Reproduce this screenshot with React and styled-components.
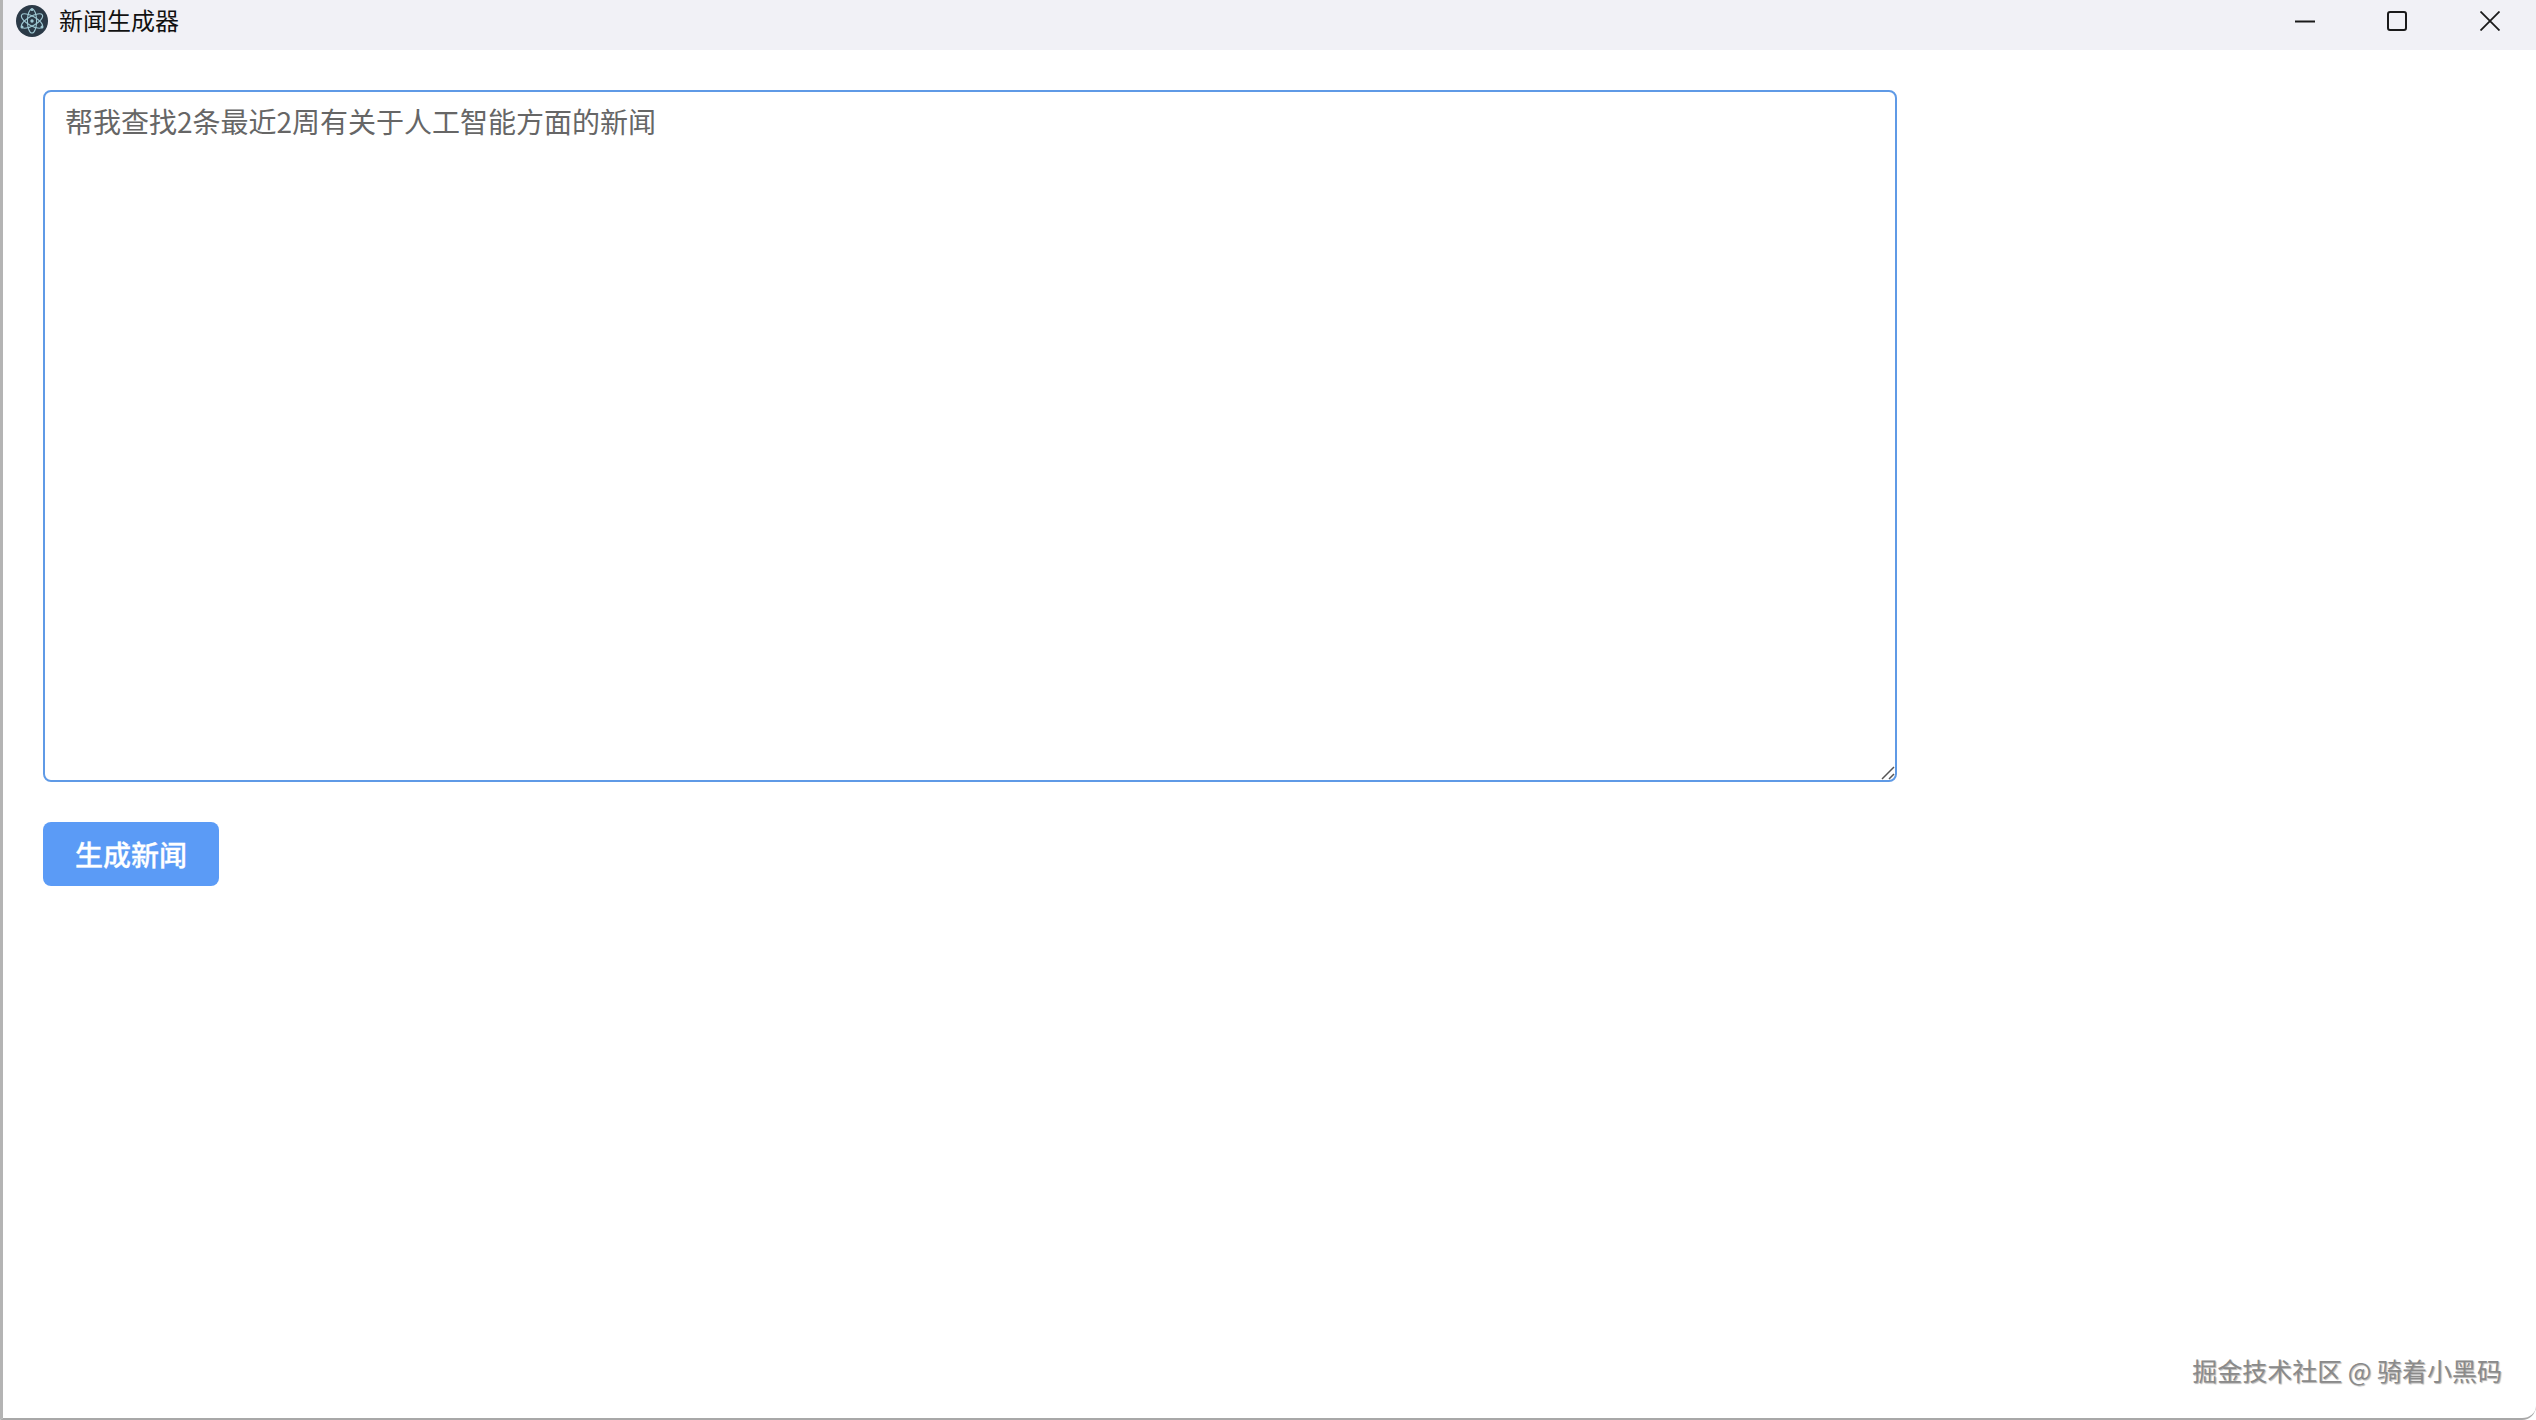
import styled, { createGlobalStyle } from 'styled-components';

const GlobalStyle = createGlobalStyle`
    html, body {
        margin: 0;
        padding: 0;
        height: 100%;
        background: #fff;
        overflow: hidden;
    }
`;

const Frame = styled.div`
    position: relative;
    box-sizing: border-box;
    width: 2536px;
    height: 1420px;
    display: flex;
    flex-direction: column;
    background: #fff;
    border-left: 3px solid #b4b4b4;
    border-bottom: 2px solid #a8a8a8;
    border-bottom-right-radius: 14px;
    font-family: "Noto Sans CJK SC", "Noto Sans", sans-serif;
`;

const TitleBar = styled.header`
    flex: none;
    box-sizing: border-box;
    height: 50px;
    display: flex;
    align-items: center;
    background: #f1f1f6;
    padding: 0 0 8px 13px;
`;

const AppLogo = styled.svg`
    width: 32px;
    height: 32px;
    flex: none;
`;

const AppTitle = styled.div`
    margin: -2px 0 0 11px;
    font-size: 24px;
    line-height: 32px;
    color: #111;
`;

const WindowButtons = styled.div`
    margin-left: auto;
    display: flex;
    height: 100%;
`;

const WindowButton = styled.button`
    width: ${props => props.$width || 92}px;
    height: 100%;
    padding: 0;
    border: none;
    background: transparent;
    display: flex;
    align-items: center;
    justify-content: center;
    color: #1a1a1a;
`;

const Main = styled.main`
    display: flex;
    flex-direction: column;
    align-items: flex-start;
    gap: 40px;
    padding: 40px 0 0 40px;
`;

const PromptBox = styled.div`
    position: relative;
    width: 1854px;
    height: 692px;
`;

const Prompt = styled.textarea`
    box-sizing: border-box;
    display: block;
    width: 100%;
    height: 100%;
    padding: 9px 20px;
    border: 2px solid #5f9ae6;
    border-radius: 8px;
    outline: none;
    resize: none;
    background: #fff;
    color: #666;
    font-family: "Noto Sans CJK SC", "Noto Sans", sans-serif;
    font-size: 28px;
    line-height: 40px;
`;

const ResizeGrip = styled.svg`
    position: absolute;
    right: 2px;
    bottom: 2px;
    width: 14px;
    height: 14px;
`;

const GenerateButton = styled.button`
    width: 176px;
    height: 64px;
    padding: 0;
    border: none;
    border-radius: 8px;
    background: #5b9bf6;
    color: #fff;
    font-family: "Noto Sans CJK SC", "Noto Sans", sans-serif;
    font-size: 28px;
    font-weight: 500;
    line-height: 64px;
    -webkit-text-stroke: 0.3px #fff;
`;

const Watermark = styled.div`
    position: absolute;
    right: 34px;
    bottom: 32px;
    font-size: 25px;
    line-height: 32px;
    color: #8a8a8a;
    text-shadow: 1px 1px 1px #b4b4b4, -1px -1px 0 #fff;
    white-space: nowrap;
`;

const ElectronLogo = () => (
    <AppLogo viewBox="0 0 32 32" fill="none">
        <circle cx="16" cy="16" r="16" fill="#2b3a47"/>
        <g stroke="#9fc9d4" strokeWidth="1.1" strokeLinecap="round">
            <ellipse cx="16" cy="16" rx="12" ry="4.6" transform="rotate(30 16 16)"/>
            <ellipse cx="16" cy="16" rx="12" ry="4.6" transform="rotate(90 16 16)"/>
            <ellipse cx="16" cy="16" rx="12" ry="4.6" transform="rotate(150 16 16)"/>
        </g>
        <circle cx="16" cy="16" r="1.7" fill="#9fc9d4"/>
        <circle cx="16" cy="4.5" r="1.5" fill="#9fc9d4"/>
        <circle cx="6" cy="22" r="1.5" fill="#9fc9d4"/>
        <circle cx="26" cy="22" r="1.5" fill="#9fc9d4"/>
    </AppLogo>
);

const App = () => {
    return (
        <Frame>
            <GlobalStyle/>
            <TitleBar>
                <ElectronLogo/>
                <AppTitle>新闻生成器</AppTitle>
                <WindowButtons>
                    <WindowButton aria-label="minimize" $width={90}>
                        <svg width="20" height="20" viewBox="0 0 20 20">
                            <path d="M0 10.5H20" stroke="currentColor" strokeWidth="2"/>
                        </svg>
                    </WindowButton>
                    <WindowButton aria-label="maximize" $width={94}>
                        <svg width="20" height="20" viewBox="0 0 20 20" fill="none">
                            <rect x="1" y="1" width="18" height="18" rx="2" stroke="currentColor" strokeWidth="2"/>
                        </svg>
                    </WindowButton>
                    <WindowButton aria-label="close">
                        <svg width="20" height="20" viewBox="0 0 20 20">
                            <path d="M0.5 0.5L19.5 19.5M19.5 0.5L0.5 19.5" stroke="currentColor" strokeWidth="1.8"/>
                        </svg>
                    </WindowButton>
                </WindowButtons>
            </TitleBar>
            <Main>
                <PromptBox>
                    <Prompt defaultValue="帮我查找2条最近2周有关于人工智能方面的新闻"/>
                    <ResizeGrip viewBox="0 0 14 14">
                        <path d="M1 13L13 1M8 13L13 8" stroke="#555" strokeWidth="1.5" fill="none"/>
                    </ResizeGrip>
                </PromptBox>
                <GenerateButton>生成新闻</GenerateButton>
            </Main>
            <Watermark>掘金技术社区 @ 骑着小黑码</Watermark>
        </Frame>
    );
};

export default App;
